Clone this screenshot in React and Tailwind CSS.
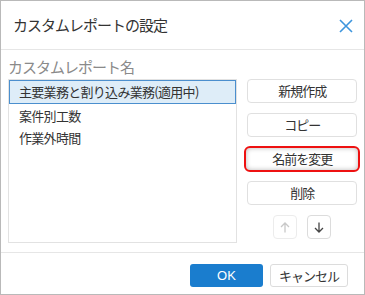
import React from "react";

const F = { fontFamily: '"Noto Sans CJK JP", "Noto Sans", sans-serif' };

function Btn({ children, focused }) {
  if (focused) {
    return (
      <div className="h-[26px] -my-[1px] -mx-[3px] rounded-[6px] border-2 border-[#ee1111] bg-white flex items-center justify-center text-[13px] tracking-[-1px] text-[#333] shadow-[inset_0_0_5px_rgba(0,0,0,0.28)]">
        {children}
      </div>
    );
  }
  return (
    <div className="h-[24px] rounded-[4px] border border-[#e0e0e0] bg-white flex items-center justify-center text-[13px] tracking-[-1px] text-[#333]">
      {children}
    </div>
  );
}

export default function App() {
  return (
    <div style={F} className="w-[365px] h-[295px] bg-white border border-[#b9b9b9] flex flex-col">
      <div className="h-[49px] border-b border-[#e6e6e6] flex items-center justify-between pl-[12px] pr-[11px] shrink-0">
        <span className="text-[15px] tracking-[-1px] text-[#333]">カスタムレポートの設定</span>
        <svg width="14" height="14" viewBox="0 0 14 14" className="mt-[2px]">
          <path d="M1 1 L13 13 M13 1 L1 13" stroke="#3d95dd" strokeWidth="1.6" fill="none" />
        </svg>
      </div>
      <div className="flex-1 px-[7px] pt-[6px] border-b border-[#e6e6e6]">
        <div className="h-[23px] leading-[22px] text-[15px] tracking-[-1px] text-[#8a8a8a]">カスタムレポート名</div>
        <div className="flex">
          <div className="w-[230px] h-[164px] border border-[#e2e2e2] text-[13px] tracking-[-0.7px] text-[#333]">
            <div className="h-[24px] border border-[#4b8fce] bg-[#deedf8] pl-[9px] flex items-center">主要業務と割り込み業務(適用中)</div>
            <div className="h-[23px] pl-[10px] flex items-center">案件別工数</div>
            <div className="h-[22px] pl-[10px] flex items-center">作業外時間</div>
          </div>
          <div className="ml-[10px] w-[110px] flex flex-col gap-[10px]">
            <Btn>新規作成</Btn>
            <Btn>コピー</Btn>
            <Btn focused>名前を変更</Btn>
            <Btn>削除</Btn>
            <div className="flex justify-center gap-[10px]">
              <div className="w-[24px] h-[24px] rounded-[4px] border border-[#ececec] flex items-center justify-center">
                <svg width="10" height="11" viewBox="0 0 10 11">
                  <path d="M5 10.5 V1 M1 5 L5 1 L9 5" stroke="#c8c8c8" strokeWidth="1.3" fill="none" />
                </svg>
              </div>
              <div className="w-[24px] h-[24px] rounded-[4px] border border-[#dcdcdc] flex items-center justify-center">
                <svg width="10" height="11" viewBox="0 0 10 11">
                  <path d="M5 0.5 V10 M1 6 L5 10 L9 6" stroke="#444" strokeWidth="1.3" fill="none" />
                </svg>
              </div>
            </div>
          </div>
        </div>
      </div>
      <div className="h-[41px] shrink-0 flex items-start justify-end gap-[7px] pt-[11px] pr-[16px]">
        <div className="w-[73px] h-[23px] rounded-[3px] bg-[#1a7dce] text-white text-[13px] flex items-center justify-center" style={{ fontFamily: '"Liberation Sans", Arial, sans-serif' }}>OK</div>
        <div className="w-[78px] h-[23px] rounded-[3px] border border-[#dcdcdc] text-[#333] text-[13px] tracking-[-1px] flex items-center justify-center">キャンセル</div>
      </div>
    </div>
  );
}
